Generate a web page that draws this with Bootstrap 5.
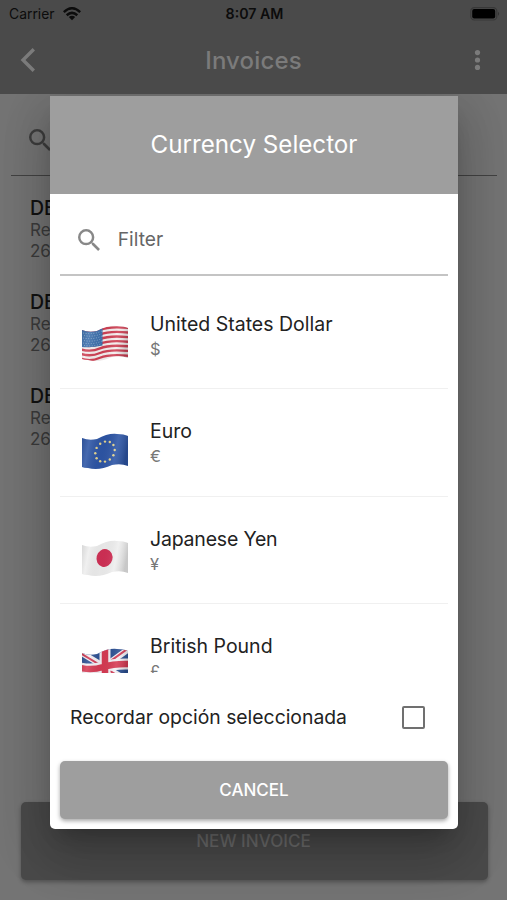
<!DOCTYPE html>
<html lang="en">
<head>
<meta charset="utf-8">
<meta name="viewport" content="width=device-width, initial-scale=1">
<title>Invoices</title>
<link href="https://cdn.jsdelivr.net/npm/bootstrap@5.3.0/dist/css/bootstrap.min.css" rel="stylesheet">
<style>
  body { font-family: Inter, "Liberation Sans", sans-serif; background: #747474; color: #222; }
  svg { display: block; flex: none; }
  .screen { height: 900px; background: #747474; }
  .topbar { height: 94px; background: #4a4a4a; z-index: 2; }
  .status { height: 28px; font-size: 13.9px; color: #0c0c0c; line-height: 28px; padding: 0 7px 0 9px; }
  .status .clock { font-weight: 600; font-size: 14.2px; }
  .third { flex: 1 1 0; }
  .appbar { height: 64px; padding: 0 20px; color: #7b7b7b; }
  .appbar .heading { font-size: 24px; font-weight: 500; letter-spacing: .15px; padding-top: 1px; }
  .search-bg { height: 82px; margin: 0 10px 0 11px; padding: 10px 0 0 18px; border-bottom: 1px solid #424242; }
  .invoice { height: 94px; padding: 21px 0 0 30px; font-size: 17px; line-height: 21px; color: #3b3b3b; }
  .invoice strong { display: block; font-size: 19.5px; line-height: 23px; font-weight: 500; color: #111; }
  .btn-new { height: 78px; margin: 0 19px 20px 21px; padding-right: 2px; background: #4a4a4a; color: #6c6c6c; border-radius: 5px; font-size: 17.1px; font-weight: 500; box-shadow: 0 2px 4px rgba(0,0,0,.3); }
  .dialog-layer { inset: 96px 49px auto 50px; height: 733px; z-index: 3; clip-path: inset(-2px -60px -100px -60px); }
  .dialog-box { height: 733px; background: #fff; border-radius: 0 0 5px 5px; box-shadow: 0 14px 19px -9px rgba(0,0,0,.2), 0 29px 47px 4px rgba(0,0,0,.14), 0 11px 56px 10px rgba(0,0,0,.12); overflow: hidden; }
  .dialog-title { height: 98px; padding-top: 1px; background: #9e9e9e; color: #fff; font-size: 24.2px; }
  .filter-row { height: 82px; margin: 0 10px; padding: 11px 0 0 14px; border-bottom: 2px solid #c4c4c4; color: #666; font-size: 19.2px; }
  .currencies { height: 397px; margin: 0 10px; padding-top: 5.5px; overflow: hidden; }
  .currency { height: 107.6px; padding: 0 0 0 21px; border-bottom: 1px solid #f0f0f0; }
  .currency svg { margin: 43.500px 21px 0 0; }
  .currency .label { padding-top: 29px; }
  .currency .name { font-size: 19.5px; line-height: 26px; color: #222; }
  .currency .sign { font-size: 16.5px; line-height: 24px; color: #777; }
  .remember { height: 88px; padding: 0 33px 0 20px; font-size: 19.35px; }
  .remember span:first-child { padding-top: 1px; }
  .tick { width: 23px; height: 23px; border: 2px solid #707070; border-radius: 2px; }
  .btn-cancel { height: 58px; margin: 0 10px; padding-top: 1px; background: #9e9e9e; color: #fff; border-radius: 5px; font-size: 17px; font-weight: 500; box-shadow: 0 2px 4px rgba(0,0,0,.35); }
</style>
</head>
<body>
<svg width="0" height="0" class="position-absolute">
  <defs>
    <clipPath id="wave"><path d="M1 5Q8 8 16 6Q27 0 36 1Q43 1 47 3V33Q40 30 31 32Q18 38 7 35Q3 35 1 34Z"/></clipPath>
    <linearGradient id="fold" x1="0" x2="1" y1="0" y2=".15">
      <stop offset="0" stop-color="#000" stop-opacity=".12"/><stop offset=".2" stop-color="#fff" stop-opacity=".12"/>
      <stop offset=".5" stop-color="#000" stop-opacity=".03"/><stop offset=".78" stop-color="#fff" stop-opacity=".1"/>
      <stop offset="1" stop-color="#000" stop-opacity=".16"/>
    </linearGradient>
    <symbol id="lens" viewBox="3 3 17.5 17.5"><path fill="currentColor" d="M15.5 14h-.79l-.28-.27A6.47 6.47 0 0 0 16 9.5 6.5 6.5 0 1 0 9.5 16c1.61 0 3.09-.59 4.23-1.57l.27.28v.79l5 4.99L20.49 19l-4.99-5zm-6 0C7.01 14 5 11.99 5 9.5S7.01 5 9.5 5 14 7.01 14 9.5 11.99 14 9.5 14z"/></symbol>
  </defs>
</svg>
<div class="screen position-relative overflow-hidden d-flex flex-column">
  <header class="topbar">
    <div class="status d-flex align-items-center">
      <div class="third d-flex align-items-center"><span class="me-1 pe-1">Carrier</span>
        <svg width="18" height="14" viewBox="0 0 18 14" fill="none" stroke="#0c0c0c" stroke-width="2.5"><path d="M.8 5.200Q9-2.600 17.200 5.200M3.700 8.300Q9 3.500 14.300 8.300"/><path fill="#0c0c0c" stroke="none" d="M5.800 10Q9 7.300 12.200 10L9 13.300Z"/></svg>
      </div>
      <span class="clock">8:07 AM</span>
      <div class="third d-flex justify-content-end">
        <svg width="30" height="14" viewBox="0 0 30 14"><rect x=".8" y=".6" width="26" height="12.4" rx="3.6" fill="none" stroke="#383838" stroke-width="1.2"/><rect x="2.2" y="2" width="23" height="9.600" rx="2" fill="#000"/><path d="M28 4.8Q30.2 6.8 28 8.8Z" fill="#333"/></svg>
      </div>
    </div>
    <div class="appbar d-flex align-items-center">
      <div class="third"><svg width="16" height="24" viewBox="0 0 16 24" fill="none" stroke="currentColor" stroke-width="3.4"><path d="M13.8 1.2L3 12L13.8 22.8"/></svg></div>
      <span class="heading">Invoices</span>
      <div class="third d-flex justify-content-end"><svg width="19" height="20" viewBox="0 0 19 20" fill="currentColor"><circle cx="9.5" cy="2.6" r="2.6"/><circle cx="9.5" cy="10" r="2.6"/><circle cx="9.5" cy="17.4" r="2.6"/></svg></div>
    </div>
  </header>
  <main class="flex-grow-1">
    <div class="search-bg d-flex align-items-center"><svg width="22" height="22" color="#3d3d3d"><use href="#lens"/></svg></div>
    <div class="invoice"><strong>DEMO</strong>Receipt<br>26</div>
    <div class="invoice"><strong>DEMO</strong>Receipt<br>26</div>
    <div class="invoice"><strong>DEMO</strong>Receipt<br>26</div>
  </main>
  <div class="btn-new d-flex align-items-center justify-content-center">NEW INVOICE</div>

  <div class="dialog-layer position-absolute">
    <section class="dialog-box d-flex flex-column">
      <div class="dialog-title d-flex align-items-center justify-content-center">Currency Selector</div>
      <div class="filter-row d-flex align-items-center">
        <svg class="ms-1" width="22" height="22" color="#888"><use href="#lens"/></svg><span class="ps-3 ms-0">&#8202;Filter</span>
      </div>
      <div class="currencies">
        <div class="currency d-flex">
          <svg width="48" height="38" viewBox="0 0 48 38"><g clip-path="url(#wave)"><path fill="#f5eeee" d="M0 0h48v38H0z"/>
            <g fill="none" stroke="#cf4054" stroke-width="2.35"><path d="M0 6Q10 9 19 5T48 3M0 10.6Q10 13.6 19 9.6T48 7.6M0 15.2Q10 18.2 19 14.2T48 12.2M0 19.8Q10 22.8 19 18.8T48 16.8M0 24.4Q10 27.4 19 23.4T48 21.4M0 29Q10 32 19 28T48 26M0 33.8Q10 36.8 19 32.8T48 30.8"/></g>
            <path fill="#3e70ad" d="M0 4Q11 8 21.500 3V20.500Q12 23 0 22Z"/>
            <path fill="none" stroke="#a9c2dc" stroke-width=".8" stroke-dasharray=".9 1.7" d="M2 8Q12 10 21 6M3 10.500Q12 12.500 21 8.500M2 13Q12 15 21 11M3 15.500Q12 17.500 21 13.500M2 18Q12 20 21 16M3 20.400Q12 22 21 18.600"/>
            <path fill="url(#fold)" d="M0 0h48v38H0z"/></g></svg>
          <div class="label"><div class="name">United States Dollar</div><div class="sign">$</div></div>
        </div>
        <div class="currency d-flex">
          <svg width="48" height="38" viewBox="0 0 48 38"><g clip-path="url(#wave)"><path fill="#2d55a5" d="M0 0h48v38H0z"/>
            <g fill="#e5d58f"><circle cx="24" cy="8.600" r="1.200"/><circle cx="28.800" cy="9" r="1.200"/><circle cx="32.400" cy="12" r="1.200"/><circle cx="33.700" cy="17" r="1.200"/><circle cx="32.400" cy="22.300" r="1.200"/><circle cx="28.800" cy="26.500" r="1.200"/><circle cx="24" cy="28.600" r="1.200"/><circle cx="19.200" cy="28.200" r="1.200"/><circle cx="15.600" cy="25.200" r="1.200"/><circle cx="14.300" cy="20.200" r="1.200"/><circle cx="15.600" cy="14.900" r="1.200"/><circle cx="19.200" cy="10.700" r="1.200"/></g>
            <path fill="url(#fold)" d="M0 0h48v38H0z"/></g></svg>
          <div class="label"><div class="name">Euro</div><div class="sign">€</div></div>
        </div>
        <div class="currency d-flex">
          <svg width="48" height="38" viewBox="0 0 48 38"><g clip-path="url(#wave)"><path fill="#eee" d="M0 0h48v38H0z"/><ellipse cx="23.500" cy="18" rx="8" ry="9" fill="#d02f55" transform="rotate(15 23.500 18)"/><path fill="url(#fold)" d="M0 0h48v38H0z"/></g></svg>
          <div class="label"><div class="name" style="letter-spacing:-.2px">Japanese Yen</div><div class="sign">¥</div></div>
        </div>
        <div class="currency d-flex">
          <svg width="48" height="38" viewBox="0 0 48 38"><g clip-path="url(#wave)"><path fill="#2b4f92" d="M0 0h48v38H0z"/>
            <path stroke="#f3eff3" stroke-width="6" d="M-1 4L49 34M-1 36L49 0"/><path stroke="#d03b55" stroke-width="2" d="M-1 5L49 35M-1 35L49 -1"/>
            <path fill="none" stroke="#f3eff3" stroke-width="11" d="M24 0V38M0 20Q11 22.500 22 19T48 16"/><path fill="none" stroke="#d63a53" stroke-width="6.500" d="M24 0V38M0 20Q11 22.500 22 19T48 16"/>
            <path fill="url(#fold)" d="M0 0h48v38H0z"/></g></svg>
          <div class="label"><div class="name">British Pound</div><div class="sign">£</div></div>
        </div>
      </div>
      <div class="remember d-flex align-items-center justify-content-between"><span>Recordar opción seleccionada</span><span class="tick"></span></div>
      <div class="btn-cancel d-flex align-items-center justify-content-center">CANCEL</div>
    </section>
  </div>
</div>
<script src="https://cdn.jsdelivr.net/npm/bootstrap@5.3.0/dist/js/bootstrap.bundle.min.js"></script>
</body>
</html>
